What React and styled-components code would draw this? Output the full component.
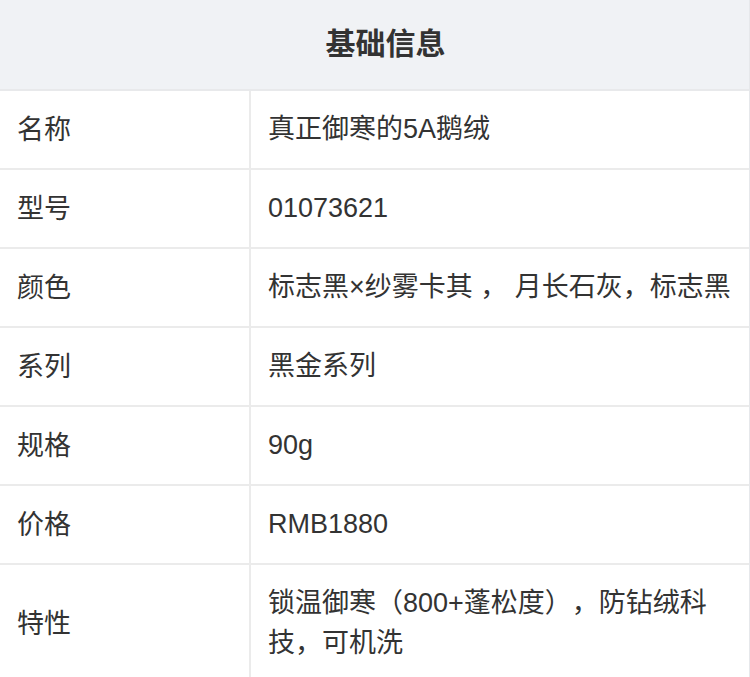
import React from 'react'
import styled, { createGlobalStyle } from 'styled-components'

const GlobalStyle = createGlobalStyle`
    body {
        margin: 0;
        background: #fff;
        font-family: "Liberation Sans", "Noto Sans CJK SC", sans-serif;
        color: #333;
        text-spacing-trim: space-all;
    }
`

const Table = styled.div`
    width: 749px;
    border-right: 1px solid #e6e8eb;
`
const Caption = styled.div`
    height: 91px;
    box-sizing: border-box;
    display: flex;
    align-items: center;
    justify-content: center;
    padding: 0 0 8px 22px;
    background: #f0f2f5;
    border-bottom: 2px solid #e8e9eb;
    font-size: 30px;
    font-weight: bold;
    color: #333;
`
const Row = styled.div`
    display: grid;
    grid-template-columns: 251px 1fr;
    border-bottom: 2px solid #ebebeb;
`
const Label = styled.div`
    display: flex;
    align-items: center;
    padding: 0 0 0 17px;
    border-right: 2px solid #ebebeb;
    font-size: 27px;
    line-height: 40px;
`
const Value = styled.div`
    padding: 18px 8px 19px 17px;
    font-size: 27px;
    line-height: 40px;
`

const rows = [
    ['名称', '真正御寒的5A鹅绒'],
    ['型号', '01073621'],
    ['颜色', '标志黑×纱雾卡其 ， 月长石灰，标志黑'],
    ['系列', '黑金系列'],
    ['规格', '90g'],
    ['价格', 'RMB1880'],
    ['特性', '锁温御寒（800+蓬松度），防钻绒科技，可机洗'],
]

const App = () => (
    <>
        <GlobalStyle />
        <Table>
            <Caption>基础信息</Caption>
            {rows.map(([label, value]) => (
                <Row key={label}>
                    <Label>{label}</Label>
                    <Value>{value}</Value>
                </Row>
            ))}
        </Table>
    </>
)

export default App
